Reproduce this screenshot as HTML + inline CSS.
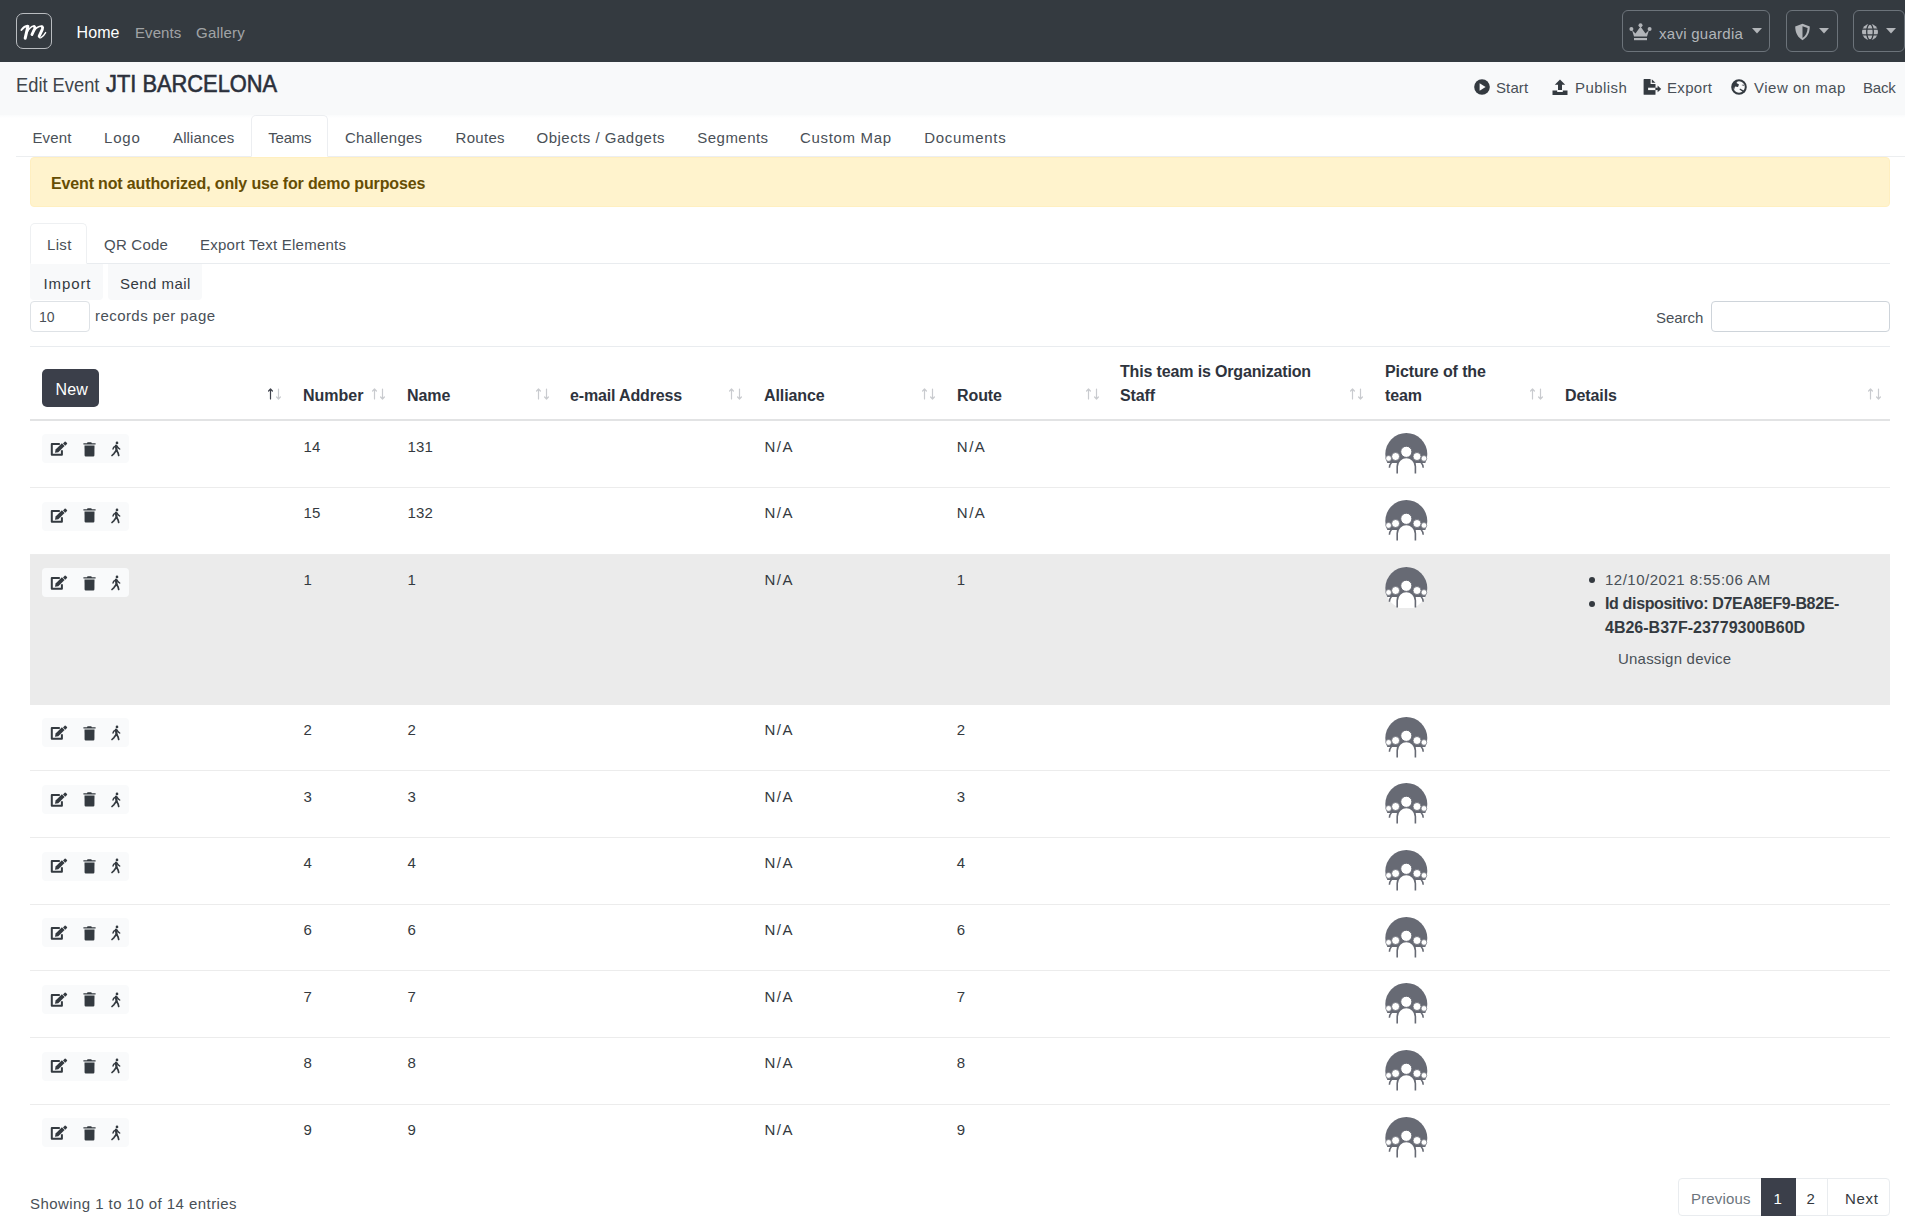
<!DOCTYPE html>
<html><head><meta charset="utf-8"><title>Edit Event</title>
<style>
html,body{margin:0;padding:0;background:#fff;}
body{width:1905px;height:1218px;position:relative;overflow:hidden;font-family:"Liberation Sans",sans-serif;color:#212529;}
.t{position:absolute;white-space:nowrap;}
.r{position:absolute;}
</style></head><body>
<div class="r" style="left:0px;top:0px;width:1905px;height:62px;background:#343a40"></div>
<div class="r" style="left:16px;top:13px;width:36px;height:36px;border:1px solid #b9bcc0;border-radius:7px;box-sizing:border-box"></div>
<svg class="r" style="left:18px;top:22px" width="32" height="20" viewBox="0 0 32 20">
<g fill="none" stroke="#fff" stroke-linecap="round" stroke-linejoin="round">
<path d="M3.4 8 Q6.2 4.2 9.6 3.8" stroke-width="1.9"/>
<path d="M9.9 4.4 L7.2 16.2" stroke-width="3"/>
<path d="M8.8 10.6 Q12.2 4.4 15.8 4.1" stroke-width="1.5"/>
<path d="M16.4 4.6 Q17.2 5.2 16.6 6.8 L13.9 12.6" stroke-width="2.8"/>
<path d="M15.4 9.2 Q19 4.2 23.4 4.1" stroke-width="1.6"/>
<path d="M24.2 4.8 Q25 5.6 24.3 7.3 L21.2 14.2" stroke-width="2.9"/>
<path d="M21.2 14.6 Q21 16.4 23 15.6 Q25.6 14.2 27.6 10.6" stroke-width="1.4"/>
</g></svg>
<div class="t" style="left:76.5px;top:20.71px;font-size:16px;line-height:24px;color:#fff;letter-spacing:0.1px;">Home</div>
<div class="t" style="left:135px;top:22.04px;font-size:15px;line-height:22px;color:rgba(255,255,255,.55);letter-spacing:0.08px;">Events</div>
<div class="t" style="left:196px;top:22.04px;font-size:15px;line-height:22px;color:rgba(255,255,255,.55);letter-spacing:0.22px;">Gallery</div>
<div class="r" style="left:1622px;top:10px;width:148px;height:42px;border:1px solid #6c737a;border-radius:6px;box-sizing:border-box"></div>
<div class="r" style="left:1786px;top:10px;width:52px;height:42px;border:1px solid #6c737a;border-radius:6px;box-sizing:border-box"></div>
<div class="r" style="left:1853px;top:10px;width:52px;height:42px;border:1px solid #6c737a;border-radius:6px;box-sizing:border-box"></div>
<svg class="r" style="left:1629px;top:23px" width="23" height="18" viewBox="0 0 23 18" fill="#b2b5b9">
<circle cx="11.5" cy="2.3" r="2"/><circle cx="2.4" cy="6" r="2"/><circle cx="20.6" cy="6" r="2"/>
<path d="M3 7 L6.5 10.5 L11.5 3.5 L16.5 10.5 L20 7 L18 13.5 H5 Z"/>
<rect x="5" y="15" width="13" height="2.2"/></svg>
<div class="t" style="left:1659px;top:23.04px;font-size:15px;line-height:22px;color:#b2b5b9;letter-spacing:0.27px;">xavi guardia</div>
<svg class="r" style="left:1752px;top:28px" width="10" height="6" viewBox="0 0 10 6"><path d="M0 0 H10 L5 5.5 Z" fill="#b2b5b9"/></svg>
<svg class="r" style="left:1794px;top:23px" width="17" height="18" viewBox="0 0 17 18">
<path d="M8.5 0.8 L15.8 3.6 C15.8 10 13 14.8 8.5 17.2 C4 14.8 1.2 10 1.2 3.6 Z" fill="#b2b5b9"/>
<path d="M8.5 3.2 L13.6 5.1 C13.4 9.8 11.6 13.2 8.5 15 Z" fill="#343a40"/></svg>
<svg class="r" style="left:1819px;top:28px" width="10" height="6" viewBox="0 0 10 6"><path d="M0 0 H10 L5 5.5 Z" fill="#b2b5b9"/></svg>
<svg class="r" style="left:1861px;top:23px" width="18" height="18" viewBox="0 0 18 18">
<circle cx="9" cy="9" r="8" fill="#b2b5b9"/>
<g stroke="#343a40" stroke-width="1.3" fill="none"><path d="M1 6.2 H17 M1 11.8 H17"/><ellipse cx="9" cy="9" rx="3.3" ry="8"/></g></svg>
<svg class="r" style="left:1886px;top:28px" width="10" height="6" viewBox="0 0 10 6"><path d="M0 0 H10 L5 5.5 Z" fill="#b2b5b9"/></svg>
<div class="r" style="left:0px;top:62px;width:1905px;height:53px;background:#f8f9fa"></div>
<div class="r" style="left:0px;top:115px;width:1905px;height:3px;background:linear-gradient(#fafbfc,#fff)"></div>
<div class="t" style="left:16px;top:70.39px;font-size:20px;line-height:30px;color:#40454b;transform:scaleX(0.915);transform-origin:0 0;">Edit Event</div>
<div class="t" style="left:106px;top:66.07px;font-size:24px;line-height:36px;color:#2b303b;transform:scaleX(0.91);transform-origin:0 0;-webkit-text-stroke:0.6px #2b303b;">JTI BARCELONA</div>
<svg class="r" style="left:1474px;top:79px" width="16" height="16" viewBox="0 0 16 16">
<circle cx="8" cy="8" r="7.8" fill="#343a40"/><path d="M5.6 4.3 L11.6 8 L5.6 11.7 Z" fill="#f8f9fa"/></svg>
<div class="t" style="left:1496px;top:77.04px;font-size:15px;line-height:22px;color:#495057;letter-spacing:0.12px;">Start</div>
<svg class="r" style="left:1552px;top:79px" width="16" height="16" viewBox="0 0 16 16" fill="#343a40">
<path d="M8 0.5 L13.2 5.8 H10 V11 H6 V5.8 H2.8 Z"/><path d="M0.5 11.5 H5.2 V13 H10.8 V11.5 H15.5 V16 H0.5 Z"/></svg>
<div class="t" style="left:1575px;top:77.04px;font-size:15px;line-height:22px;color:#495057;letter-spacing:0.45px;">Publish</div>
<svg class="r" style="left:1643px;top:79px" width="19" height="16" viewBox="0 0 19 16">
<path d="M0.6 0.6 Q0.6 0 1.2 0 H7.6 V4.9 H12.5 V15.2 Q12.5 15.8 11.9 15.8 H1.2 Q0.6 15.8 0.6 15.2 Z" fill="#343a40"/>
<path d="M8.8 0.2 L12.5 3.7 H8.8 Z" fill="#343a40"/>
<rect x="5.1" y="8.7" width="7.4" height="2.4" fill="#f8f9fa"/>
<rect x="12.5" y="8.7" width="2.4" height="2.4" fill="#343a40"/>
<path d="M14.6 6.4 L18.2 9.9 L14.6 13.2 Z" fill="#343a40"/></svg>
<div class="t" style="left:1667px;top:77.04px;font-size:15px;line-height:22px;color:#495057;letter-spacing:0.32px;">Export</div>
<svg class="r" style="left:1731px;top:79px" width="16" height="16" viewBox="0 0 16 16">
<circle cx="8" cy="8" r="6.8" fill="none" stroke="#343a40" stroke-width="2"/>
<path d="M2 5 C3 2.5 5 1.8 6.5 2 L5.5 4 L8 5.5 L7 8 L4 7.5 L3 11 C2 9 1.6 7 2 5Z" fill="#343a40"/>
<path d="M9 9.5 L14.5 12.5 L13 13.8 L8.5 10.5 Z" fill="#343a40"/><path d="M10.5 6 L12.5 5.5 L13 7 Z" fill="#343a40"/></svg>
<div class="t" style="left:1754px;top:77.04px;font-size:15px;line-height:22px;color:#495057;letter-spacing:0.5px;">View on map</div>
<div class="t" style="left:1863px;top:77.04px;font-size:15px;line-height:22px;color:#495057;letter-spacing:-0.23px;">Back</div>
<div class="r" style="left:16px;top:156px;width:1889px;height:1px;background:#eceef0"></div>
<div class="r" style="left:251px;top:115px;width:77px;height:42px;border:1px solid #eceef1;border-bottom-color:#fff;border-radius:5px 5px 0 0;box-sizing:border-box;background:#fff"></div>
<div class="t" style="left:32.5px;top:127.04px;font-size:15px;line-height:22px;color:#495057;letter-spacing:0.12px;">Event</div>
<div class="t" style="left:104px;top:127.04px;font-size:15px;line-height:22px;color:#495057;letter-spacing:0.8px;">Logo</div>
<div class="t" style="left:173px;top:127.04px;font-size:15px;line-height:22px;color:#495057;letter-spacing:0.14px;">Alliances</div>
<div class="t" style="left:268.3px;top:127.04px;font-size:15px;line-height:22px;color:#495057;letter-spacing:-0.22px;">Teams</div>
<div class="t" style="left:345px;top:127.04px;font-size:15px;line-height:22px;color:#495057;letter-spacing:0.22px;">Challenges</div>
<div class="t" style="left:455.6px;top:127.04px;font-size:15px;line-height:22px;color:#495057;letter-spacing:0.28px;">Routes</div>
<div class="t" style="left:536.5px;top:127.04px;font-size:15px;line-height:22px;color:#495057;letter-spacing:0.5px;">Objects / Gadgets</div>
<div class="t" style="left:697.3px;top:127.04px;font-size:15px;line-height:22px;color:#495057;letter-spacing:0.47px;">Segments</div>
<div class="t" style="left:800px;top:127.04px;font-size:15px;line-height:22px;color:#495057;letter-spacing:0.68px;">Custom Map</div>
<div class="t" style="left:924.2px;top:127.04px;font-size:15px;line-height:22px;color:#495057;letter-spacing:0.71px;">Documents</div>
<div class="r" style="left:30px;top:157px;width:1860px;height:50px;background:#fff3cd;border:1px solid #ffefc0;box-sizing:border-box;border-radius:4px"></div>
<div class="t" style="left:51px;top:171.71px;font-size:16px;line-height:24px;font-weight:700;color:#664d03;letter-spacing:-0.15px;">Event not authorized, only use for demo purposes</div>
<div class="r" style="left:30px;top:263px;width:1860px;height:1px;background:#e9ecef"></div>
<div class="r" style="left:30px;top:223px;width:57px;height:41px;border:1px solid #eef0f2;border-bottom-color:#fff;border-radius:5px 5px 0 0;box-sizing:border-box;background:#fff"></div>
<div class="t" style="left:47px;top:234.04px;font-size:15px;line-height:22px;color:#495057;letter-spacing:0.33px;">List</div>
<div class="t" style="left:104px;top:234.04px;font-size:15px;line-height:22px;color:#495057;letter-spacing:0.22px;">QR Code</div>
<div class="t" style="left:200px;top:234.04px;font-size:15px;line-height:22px;color:#495057;letter-spacing:0.24px;">Export Text Elements</div>
<div class="r" style="left:30px;top:264px;width:73px;height:36px;background:#f8f9fa;border-radius:0 0 4px 4px"></div>
<div class="r" style="left:108px;top:264px;width:94px;height:36px;background:#f8f9fa;border-radius:0 0 4px 4px"></div>
<div class="t" style="left:43.5px;top:273.04px;font-size:15px;line-height:22px;color:#343a40;letter-spacing:0.9px;">Import</div>
<div class="t" style="left:120px;top:273.04px;font-size:15px;line-height:22px;color:#343a40;letter-spacing:0.46px;">Send mail</div>
<div class="r" style="left:30px;top:301px;width:60px;height:31px;border:1px solid #dee2e6;border-radius:4px;box-sizing:border-box;background:#fff"></div>
<div class="t" style="left:39px;top:306.87px;font-size:14px;line-height:21px;color:#495057;">10</div>
<div class="t" style="left:95px;top:305.04px;font-size:15px;line-height:22px;color:#495057;letter-spacing:0.44px;">records per page</div>
<div class="t" style="left:1656px;top:307.04px;font-size:15px;line-height:22px;color:#495057;letter-spacing:-0.06px;">Search</div>
<div class="r" style="left:1711px;top:301px;width:179px;height:31px;border:1px solid #ced4da;border-radius:4px;box-sizing:border-box;background:#fff"></div>
<div class="r" style="left:30px;top:346px;width:1860px;height:1px;background:#e9ecef"></div>
<div class="r" style="left:42px;top:369px;width:57px;height:38px;background:#3b3f4a;border-radius:5px"></div>
<div class="t" style="left:55.5px;top:377.71px;font-size:16px;line-height:24px;color:#fff;letter-spacing:0.2px;">New</div>
<svg class="r" style="left:267px;top:388px" width="15" height="12" viewBox="0 0 15 12">
<g fill="none" stroke-width="1.2" stroke-linecap="round" stroke-linejoin="round">
<path d="M3.5 11 V1 M1.6 3 L3.5 1 L5.4 3" stroke="#40434d"/>
<path d="M11.5 1 V11 M9.6 9 L11.5 11 L13.4 9" stroke="#c9cbcf"/></g></svg>
<div class="t" style="left:303px;top:383.71px;font-size:16px;line-height:24px;font-weight:700;color:#2e333d;letter-spacing:0px;">Number</div>
<svg class="r" style="left:371px;top:388px" width="15" height="12" viewBox="0 0 15 12">
<g fill="none" stroke-width="1.2" stroke-linecap="round" stroke-linejoin="round">
<path d="M3.5 11 V1 M1.6 3 L3.5 1 L5.4 3" stroke="#c9cbcf"/>
<path d="M11.5 1 V11 M9.6 9 L11.5 11 L13.4 9" stroke="#c9cbcf"/></g></svg>
<div class="t" style="left:407px;top:383.71px;font-size:16px;line-height:24px;font-weight:700;color:#2e333d;letter-spacing:-0.1px;">Name</div>
<svg class="r" style="left:535px;top:388px" width="15" height="12" viewBox="0 0 15 12">
<g fill="none" stroke-width="1.2" stroke-linecap="round" stroke-linejoin="round">
<path d="M3.5 11 V1 M1.6 3 L3.5 1 L5.4 3" stroke="#c9cbcf"/>
<path d="M11.5 1 V11 M9.6 9 L11.5 11 L13.4 9" stroke="#c9cbcf"/></g></svg>
<div class="t" style="left:570px;top:383.71px;font-size:16px;line-height:24px;font-weight:700;color:#2e333d;letter-spacing:-0.15px;">e-mail Address</div>
<svg class="r" style="left:728px;top:388px" width="15" height="12" viewBox="0 0 15 12">
<g fill="none" stroke-width="1.2" stroke-linecap="round" stroke-linejoin="round">
<path d="M3.5 11 V1 M1.6 3 L3.5 1 L5.4 3" stroke="#c9cbcf"/>
<path d="M11.5 1 V11 M9.6 9 L11.5 11 L13.4 9" stroke="#c9cbcf"/></g></svg>
<div class="t" style="left:764px;top:383.71px;font-size:16px;line-height:24px;font-weight:700;color:#2e333d;letter-spacing:-0.1px;">Alliance</div>
<svg class="r" style="left:921px;top:388px" width="15" height="12" viewBox="0 0 15 12">
<g fill="none" stroke-width="1.2" stroke-linecap="round" stroke-linejoin="round">
<path d="M3.5 11 V1 M1.6 3 L3.5 1 L5.4 3" stroke="#c9cbcf"/>
<path d="M11.5 1 V11 M9.6 9 L11.5 11 L13.4 9" stroke="#c9cbcf"/></g></svg>
<div class="t" style="left:957px;top:383.71px;font-size:16px;line-height:24px;font-weight:700;color:#2e333d;letter-spacing:-0.1px;">Route</div>
<svg class="r" style="left:1085px;top:388px" width="15" height="12" viewBox="0 0 15 12">
<g fill="none" stroke-width="1.2" stroke-linecap="round" stroke-linejoin="round">
<path d="M3.5 11 V1 M1.6 3 L3.5 1 L5.4 3" stroke="#c9cbcf"/>
<path d="M11.5 1 V11 M9.6 9 L11.5 11 L13.4 9" stroke="#c9cbcf"/></g></svg>
<div class="t" style="left:1120px;top:359.71px;font-size:16px;line-height:24px;font-weight:700;color:#2e333d;letter-spacing:-0.15px;">This team is Organization</div>
<div class="t" style="left:1120px;top:383.71px;font-size:16px;line-height:24px;font-weight:700;color:#2e333d;letter-spacing:-0.15px;">Staff</div>
<svg class="r" style="left:1349px;top:388px" width="15" height="12" viewBox="0 0 15 12">
<g fill="none" stroke-width="1.2" stroke-linecap="round" stroke-linejoin="round">
<path d="M3.5 11 V1 M1.6 3 L3.5 1 L5.4 3" stroke="#c9cbcf"/>
<path d="M11.5 1 V11 M9.6 9 L11.5 11 L13.4 9" stroke="#c9cbcf"/></g></svg>
<div class="t" style="left:1385px;top:359.71px;font-size:16px;line-height:24px;font-weight:700;color:#2e333d;letter-spacing:-0.1px;">Picture of the</div>
<div class="t" style="left:1385px;top:383.71px;font-size:16px;line-height:24px;font-weight:700;color:#2e333d;letter-spacing:-0.1px;">team</div>
<svg class="r" style="left:1529px;top:388px" width="15" height="12" viewBox="0 0 15 12">
<g fill="none" stroke-width="1.2" stroke-linecap="round" stroke-linejoin="round">
<path d="M3.5 11 V1 M1.6 3 L3.5 1 L5.4 3" stroke="#c9cbcf"/>
<path d="M11.5 1 V11 M9.6 9 L11.5 11 L13.4 9" stroke="#c9cbcf"/></g></svg>
<div class="t" style="left:1565px;top:383.71px;font-size:16px;line-height:24px;font-weight:700;color:#2e333d;letter-spacing:-0.1px;">Details</div>
<svg class="r" style="left:1867px;top:388px" width="15" height="12" viewBox="0 0 15 12">
<g fill="none" stroke-width="1.2" stroke-linecap="round" stroke-linejoin="round">
<path d="M3.5 11 V1 M1.6 3 L3.5 1 L5.4 3" stroke="#c9cbcf"/>
<path d="M11.5 1 V11 M9.6 9 L11.5 11 L13.4 9" stroke="#c9cbcf"/></g></svg>
<div class="r" style="left:30px;top:419px;width:1860px;height:2px;background:#e2e3e4"></div>
<div class="r" style="left:42px;top:434px;width:87px;height:29px;background:#f9fafb;border-radius:4px"></div>
<svg class="r" style="left:48px;top:439px" width="22" height="20" viewBox="0 0 22 20">
<path d="M11.8 4.9 H3.8 V15.7 H13.9 V11.2" fill="none" stroke="#343a40" stroke-width="2" stroke-linejoin="round"/>
<path d="M7 13.8 L7.6 10.6 L13.9 4.3 L16.6 7 L10.3 13.3 Z" fill="#343a40"/>
<path d="M15 4.4 L16.7 2.7 Q17.2 2.3 17.7 2.7 L19 4 Q19.4 4.5 19 5 L17.3 6.7 Z" fill="#343a40"/>
</svg>
<svg class="r" style="left:82.5px;top:441.5px" width="13" height="15" viewBox="0 0 13 15" fill="#343a40">
<path d="M4.5 0.3 H8.3 L8.8 1.2 H12.6 V2.5 H0.4 V1.2 H4 Z"/><path d="M1.5 3.4 H11.5 L11.4 13.4 Q11.3 14.4 10.3 14.4 H2.7 Q1.7 14.4 1.6 13.4 Z"/></svg>
<svg class="r" style="left:110px;top:440px" width="12" height="17" viewBox="0 0 12 17">
<circle cx="7" cy="2.9" r="1.35" fill="#343a40"/>
<g fill="none" stroke="#343a40" stroke-linecap="round" stroke-linejoin="round">
<path d="M6 5.6 L6.6 10.9" stroke-width="2.3"/>
<path d="M5.6 6.1 L3.6 7.4 L3 9" stroke-width="1.4"/>
<path d="M6.9 6 L8.2 7.9 L9.7 9" stroke-width="1.4"/>
<path d="M6.8 10.8 L8.1 13 L8.7 15.5" stroke-width="1.7"/>
<path d="M5.8 11 L4 13.6 L2 15.5" stroke-width="1.7"/>
</g></svg>
<div class="t" style="left:303.5px;top:435.84px;font-size:15px;line-height:22px;color:#343a40;letter-spacing:0.1px;">14</div>
<div class="t" style="left:407.5px;top:435.84px;font-size:15px;line-height:22px;color:#343a40;letter-spacing:0.1px;">131</div>
<div class="t" style="left:764.5px;top:435.84px;font-size:15px;line-height:22px;color:#343a40;letter-spacing:1.5px;">N/A</div>
<div class="t" style="left:956.8px;top:435.84px;font-size:15px;line-height:22px;color:#343a40;letter-spacing:1.5px;">N/A</div>
<svg class="r" style="left:1384.5px;top:433.3px" width="43" height="41" viewBox="0 0 43 41">
<defs><clipPath id="c433"><rect x="0" y="0" width="43" height="30"/></clipPath></defs>
<circle cx="21.3" cy="21" r="21" fill="#fff"/><circle cx="21.3" cy="21" r="21" fill="#676a74" clip-path="url(#c433)"/>
<path d="M0.6 29 Q1 28.5 3 28.5" stroke="#676a74" stroke-width="0" fill="none"/>

<path d="M4.4 34.8 Q4.8 28.2 11.4 27.5" fill="none" stroke="#676a74" stroke-width="1.5"/>
<path d="M38.2 34.8 Q37.8 28.2 31.2 27.5" fill="none" stroke="#676a74" stroke-width="1.5"/>
<path d="M12.2 40.5 V33.5 A9.1 9.1 0 0 1 30.4 33.5 V40.5" fill="#fff" stroke="#676a74" stroke-width="1.6"/>
<circle cx="21.3" cy="18.8" r="5.6" fill="#fff" stroke="#676a74" stroke-width="1"/>
<circle cx="10.6" cy="23.5" r="4" fill="#fff" stroke="#676a74" stroke-width="0.8"/>
<circle cx="32" cy="23.5" r="4" fill="#fff" stroke="#676a74" stroke-width="0.8"/>
<circle cx="3.6" cy="25.4" r="2.8" fill="#fff" stroke="#676a74" stroke-width="0.6"/>
<circle cx="39" cy="25.4" r="2.8" fill="#fff" stroke="#676a74" stroke-width="0.6"/>
</svg>
<div class="r" style="left:30px;top:487px;width:1860px;height:1px;background:#ececec"></div>
<div class="r" style="left:42px;top:502px;width:87px;height:29px;background:#f9fafb;border-radius:4px"></div>
<svg class="r" style="left:48px;top:506px" width="22" height="20" viewBox="0 0 22 20">
<path d="M11.8 4.9 H3.8 V15.7 H13.9 V11.2" fill="none" stroke="#343a40" stroke-width="2" stroke-linejoin="round"/>
<path d="M7 13.8 L7.6 10.6 L13.9 4.3 L16.6 7 L10.3 13.3 Z" fill="#343a40"/>
<path d="M15 4.4 L16.7 2.7 Q17.2 2.3 17.7 2.7 L19 4 Q19.4 4.5 19 5 L17.3 6.7 Z" fill="#343a40"/>
</svg>
<svg class="r" style="left:82.5px;top:507.5px" width="13" height="15" viewBox="0 0 13 15" fill="#343a40">
<path d="M4.5 0.3 H8.3 L8.8 1.2 H12.6 V2.5 H0.4 V1.2 H4 Z"/><path d="M1.5 3.4 H11.5 L11.4 13.4 Q11.3 14.4 10.3 14.4 H2.7 Q1.7 14.4 1.6 13.4 Z"/></svg>
<svg class="r" style="left:110px;top:507px" width="12" height="17" viewBox="0 0 12 17">
<circle cx="7" cy="2.9" r="1.35" fill="#343a40"/>
<g fill="none" stroke="#343a40" stroke-linecap="round" stroke-linejoin="round">
<path d="M6 5.6 L6.6 10.9" stroke-width="2.3"/>
<path d="M5.6 6.1 L3.6 7.4 L3 9" stroke-width="1.4"/>
<path d="M6.9 6 L8.2 7.9 L9.7 9" stroke-width="1.4"/>
<path d="M6.8 10.8 L8.1 13 L8.7 15.5" stroke-width="1.7"/>
<path d="M5.8 11 L4 13.6 L2 15.5" stroke-width="1.7"/>
</g></svg>
<div class="t" style="left:303.5px;top:502.04px;font-size:15px;line-height:22px;color:#343a40;letter-spacing:0.1px;">15</div>
<div class="t" style="left:407.5px;top:502.04px;font-size:15px;line-height:22px;color:#343a40;letter-spacing:0.1px;">132</div>
<div class="t" style="left:764.5px;top:502.04px;font-size:15px;line-height:22px;color:#343a40;letter-spacing:1.5px;">N/A</div>
<div class="t" style="left:956.8px;top:502.04px;font-size:15px;line-height:22px;color:#343a40;letter-spacing:1.5px;">N/A</div>
<svg class="r" style="left:1384.5px;top:499.8px" width="43" height="41" viewBox="0 0 43 41">
<defs><clipPath id="c499"><rect x="0" y="0" width="43" height="30"/></clipPath></defs>
<circle cx="21.3" cy="21" r="21" fill="#fff"/><circle cx="21.3" cy="21" r="21" fill="#676a74" clip-path="url(#c499)"/>
<path d="M0.6 29 Q1 28.5 3 28.5" stroke="#676a74" stroke-width="0" fill="none"/>

<path d="M4.4 34.8 Q4.8 28.2 11.4 27.5" fill="none" stroke="#676a74" stroke-width="1.5"/>
<path d="M38.2 34.8 Q37.8 28.2 31.2 27.5" fill="none" stroke="#676a74" stroke-width="1.5"/>
<path d="M12.2 40.5 V33.5 A9.1 9.1 0 0 1 30.4 33.5 V40.5" fill="#fff" stroke="#676a74" stroke-width="1.6"/>
<circle cx="21.3" cy="18.8" r="5.6" fill="#fff" stroke="#676a74" stroke-width="1"/>
<circle cx="10.6" cy="23.5" r="4" fill="#fff" stroke="#676a74" stroke-width="0.8"/>
<circle cx="32" cy="23.5" r="4" fill="#fff" stroke="#676a74" stroke-width="0.8"/>
<circle cx="3.6" cy="25.4" r="2.8" fill="#fff" stroke="#676a74" stroke-width="0.6"/>
<circle cx="39" cy="25.4" r="2.8" fill="#fff" stroke="#676a74" stroke-width="0.6"/>
</svg>
<div class="r" style="left:30px;top:555px;width:1860px;height:150px;background:#ebebeb"></div>
<div class="r" style="left:30px;top:554px;width:1860px;height:1px;background:#ececec"></div>
<div class="r" style="left:42px;top:568px;width:87px;height:29px;background:#f9fafb;border-radius:4px"></div>
<svg class="r" style="left:48px;top:573px" width="22" height="20" viewBox="0 0 22 20">
<path d="M11.8 4.9 H3.8 V15.7 H13.9 V11.2" fill="none" stroke="#343a40" stroke-width="2" stroke-linejoin="round"/>
<path d="M7 13.8 L7.6 10.6 L13.9 4.3 L16.6 7 L10.3 13.3 Z" fill="#343a40"/>
<path d="M15 4.4 L16.7 2.7 Q17.2 2.3 17.7 2.7 L19 4 Q19.4 4.5 19 5 L17.3 6.7 Z" fill="#343a40"/>
</svg>
<svg class="r" style="left:82.5px;top:575.5px" width="13" height="15" viewBox="0 0 13 15" fill="#343a40">
<path d="M4.5 0.3 H8.3 L8.8 1.2 H12.6 V2.5 H0.4 V1.2 H4 Z"/><path d="M1.5 3.4 H11.5 L11.4 13.4 Q11.3 14.4 10.3 14.4 H2.7 Q1.7 14.4 1.6 13.4 Z"/></svg>
<svg class="r" style="left:110px;top:574px" width="12" height="17" viewBox="0 0 12 17">
<circle cx="7" cy="2.9" r="1.35" fill="#343a40"/>
<g fill="none" stroke="#343a40" stroke-linecap="round" stroke-linejoin="round">
<path d="M6 5.6 L6.6 10.9" stroke-width="2.3"/>
<path d="M5.6 6.1 L3.6 7.4 L3 9" stroke-width="1.4"/>
<path d="M6.9 6 L8.2 7.9 L9.7 9" stroke-width="1.4"/>
<path d="M6.8 10.8 L8.1 13 L8.7 15.5" stroke-width="1.7"/>
<path d="M5.8 11 L4 13.6 L2 15.5" stroke-width="1.7"/>
</g></svg>
<div class="t" style="left:303.5px;top:569.04px;font-size:15px;line-height:22px;color:#343a40;letter-spacing:0.1px;">1</div>
<div class="t" style="left:407.5px;top:569.04px;font-size:15px;line-height:22px;color:#343a40;letter-spacing:0.1px;">1</div>
<div class="t" style="left:764.5px;top:569.04px;font-size:15px;line-height:22px;color:#343a40;letter-spacing:1.5px;">N/A</div>
<div class="t" style="left:956.8px;top:569.04px;font-size:15px;line-height:22px;color:#343a40;letter-spacing:0.1px;">1</div>
<svg class="r" style="left:1384.5px;top:566.8px" width="43" height="41" viewBox="0 0 43 41">
<defs><clipPath id="c566"><rect x="0" y="0" width="43" height="30"/></clipPath></defs>
<circle cx="21.3" cy="21" r="21" fill="#fff"/><circle cx="21.3" cy="21" r="21" fill="#676a74" clip-path="url(#c566)"/>
<path d="M0.6 29 Q1 28.5 3 28.5" stroke="#676a74" stroke-width="0" fill="none"/>

<path d="M4.4 34.8 Q4.8 28.2 11.4 27.5" fill="none" stroke="#676a74" stroke-width="1.5"/>
<path d="M38.2 34.8 Q37.8 28.2 31.2 27.5" fill="none" stroke="#676a74" stroke-width="1.5"/>
<path d="M12.2 40.5 V33.5 A9.1 9.1 0 0 1 30.4 33.5 V40.5" fill="#fff" stroke="#676a74" stroke-width="1.6"/>
<circle cx="21.3" cy="18.8" r="5.6" fill="#fff" stroke="#676a74" stroke-width="1"/>
<circle cx="10.6" cy="23.5" r="4" fill="#fff" stroke="#676a74" stroke-width="0.8"/>
<circle cx="32" cy="23.5" r="4" fill="#fff" stroke="#676a74" stroke-width="0.8"/>
<circle cx="3.6" cy="25.4" r="2.8" fill="#fff" stroke="#676a74" stroke-width="0.6"/>
<circle cx="39" cy="25.4" r="2.8" fill="#fff" stroke="#676a74" stroke-width="0.6"/>
</svg>
<div class="r" style="left:42px;top:718px;width:87px;height:29px;background:#f9fafb;border-radius:4px"></div>
<svg class="r" style="left:48px;top:723px" width="22" height="20" viewBox="0 0 22 20">
<path d="M11.8 4.9 H3.8 V15.7 H13.9 V11.2" fill="none" stroke="#343a40" stroke-width="2" stroke-linejoin="round"/>
<path d="M7 13.8 L7.6 10.6 L13.9 4.3 L16.6 7 L10.3 13.3 Z" fill="#343a40"/>
<path d="M15 4.4 L16.7 2.7 Q17.2 2.3 17.7 2.7 L19 4 Q19.4 4.5 19 5 L17.3 6.7 Z" fill="#343a40"/>
</svg>
<svg class="r" style="left:82.5px;top:725.5px" width="13" height="15" viewBox="0 0 13 15" fill="#343a40">
<path d="M4.5 0.3 H8.3 L8.8 1.2 H12.6 V2.5 H0.4 V1.2 H4 Z"/><path d="M1.5 3.4 H11.5 L11.4 13.4 Q11.3 14.4 10.3 14.4 H2.7 Q1.7 14.4 1.6 13.4 Z"/></svg>
<svg class="r" style="left:110px;top:724px" width="12" height="17" viewBox="0 0 12 17">
<circle cx="7" cy="2.9" r="1.35" fill="#343a40"/>
<g fill="none" stroke="#343a40" stroke-linecap="round" stroke-linejoin="round">
<path d="M6 5.6 L6.6 10.9" stroke-width="2.3"/>
<path d="M5.6 6.1 L3.6 7.4 L3 9" stroke-width="1.4"/>
<path d="M6.9 6 L8.2 7.9 L9.7 9" stroke-width="1.4"/>
<path d="M6.8 10.8 L8.1 13 L8.7 15.5" stroke-width="1.7"/>
<path d="M5.8 11 L4 13.6 L2 15.5" stroke-width="1.7"/>
</g></svg>
<div class="t" style="left:303.5px;top:719.04px;font-size:15px;line-height:22px;color:#343a40;letter-spacing:0.1px;">2</div>
<div class="t" style="left:407.5px;top:719.04px;font-size:15px;line-height:22px;color:#343a40;letter-spacing:0.1px;">2</div>
<div class="t" style="left:764.5px;top:719.04px;font-size:15px;line-height:22px;color:#343a40;letter-spacing:1.5px;">N/A</div>
<div class="t" style="left:956.8px;top:719.04px;font-size:15px;line-height:22px;color:#343a40;letter-spacing:0.1px;">2</div>
<svg class="r" style="left:1384.5px;top:716.8px" width="43" height="41" viewBox="0 0 43 41">
<defs><clipPath id="c716"><rect x="0" y="0" width="43" height="30"/></clipPath></defs>
<circle cx="21.3" cy="21" r="21" fill="#fff"/><circle cx="21.3" cy="21" r="21" fill="#676a74" clip-path="url(#c716)"/>
<path d="M0.6 29 Q1 28.5 3 28.5" stroke="#676a74" stroke-width="0" fill="none"/>

<path d="M4.4 34.8 Q4.8 28.2 11.4 27.5" fill="none" stroke="#676a74" stroke-width="1.5"/>
<path d="M38.2 34.8 Q37.8 28.2 31.2 27.5" fill="none" stroke="#676a74" stroke-width="1.5"/>
<path d="M12.2 40.5 V33.5 A9.1 9.1 0 0 1 30.4 33.5 V40.5" fill="#fff" stroke="#676a74" stroke-width="1.6"/>
<circle cx="21.3" cy="18.8" r="5.6" fill="#fff" stroke="#676a74" stroke-width="1"/>
<circle cx="10.6" cy="23.5" r="4" fill="#fff" stroke="#676a74" stroke-width="0.8"/>
<circle cx="32" cy="23.5" r="4" fill="#fff" stroke="#676a74" stroke-width="0.8"/>
<circle cx="3.6" cy="25.4" r="2.8" fill="#fff" stroke="#676a74" stroke-width="0.6"/>
<circle cx="39" cy="25.4" r="2.8" fill="#fff" stroke="#676a74" stroke-width="0.6"/>
</svg>
<div class="r" style="left:30px;top:770px;width:1860px;height:1px;background:#ececec"></div>
<div class="r" style="left:42px;top:785px;width:87px;height:29px;background:#f9fafb;border-radius:4px"></div>
<svg class="r" style="left:48px;top:790px" width="22" height="20" viewBox="0 0 22 20">
<path d="M11.8 4.9 H3.8 V15.7 H13.9 V11.2" fill="none" stroke="#343a40" stroke-width="2" stroke-linejoin="round"/>
<path d="M7 13.8 L7.6 10.6 L13.9 4.3 L16.6 7 L10.3 13.3 Z" fill="#343a40"/>
<path d="M15 4.4 L16.7 2.7 Q17.2 2.3 17.7 2.7 L19 4 Q19.4 4.5 19 5 L17.3 6.7 Z" fill="#343a40"/>
</svg>
<svg class="r" style="left:82.5px;top:791.5px" width="13" height="15" viewBox="0 0 13 15" fill="#343a40">
<path d="M4.5 0.3 H8.3 L8.8 1.2 H12.6 V2.5 H0.4 V1.2 H4 Z"/><path d="M1.5 3.4 H11.5 L11.4 13.4 Q11.3 14.4 10.3 14.4 H2.7 Q1.7 14.4 1.6 13.4 Z"/></svg>
<svg class="r" style="left:110px;top:791px" width="12" height="17" viewBox="0 0 12 17">
<circle cx="7" cy="2.9" r="1.35" fill="#343a40"/>
<g fill="none" stroke="#343a40" stroke-linecap="round" stroke-linejoin="round">
<path d="M6 5.6 L6.6 10.9" stroke-width="2.3"/>
<path d="M5.6 6.1 L3.6 7.4 L3 9" stroke-width="1.4"/>
<path d="M6.9 6 L8.2 7.9 L9.7 9" stroke-width="1.4"/>
<path d="M6.8 10.8 L8.1 13 L8.7 15.5" stroke-width="1.7"/>
<path d="M5.8 11 L4 13.6 L2 15.5" stroke-width="1.7"/>
</g></svg>
<div class="t" style="left:303.5px;top:785.71px;font-size:15px;line-height:22px;color:#343a40;letter-spacing:0.1px;">3</div>
<div class="t" style="left:407.5px;top:785.71px;font-size:15px;line-height:22px;color:#343a40;letter-spacing:0.1px;">3</div>
<div class="t" style="left:764.5px;top:785.71px;font-size:15px;line-height:22px;color:#343a40;letter-spacing:1.5px;">N/A</div>
<div class="t" style="left:956.8px;top:785.71px;font-size:15px;line-height:22px;color:#343a40;letter-spacing:0.1px;">3</div>
<svg class="r" style="left:1384.5px;top:783.4699999999999px" width="43" height="41" viewBox="0 0 43 41">
<defs><clipPath id="c783"><rect x="0" y="0" width="43" height="30"/></clipPath></defs>
<circle cx="21.3" cy="21" r="21" fill="#fff"/><circle cx="21.3" cy="21" r="21" fill="#676a74" clip-path="url(#c783)"/>
<path d="M0.6 29 Q1 28.5 3 28.5" stroke="#676a74" stroke-width="0" fill="none"/>

<path d="M4.4 34.8 Q4.8 28.2 11.4 27.5" fill="none" stroke="#676a74" stroke-width="1.5"/>
<path d="M38.2 34.8 Q37.8 28.2 31.2 27.5" fill="none" stroke="#676a74" stroke-width="1.5"/>
<path d="M12.2 40.5 V33.5 A9.1 9.1 0 0 1 30.4 33.5 V40.5" fill="#fff" stroke="#676a74" stroke-width="1.6"/>
<circle cx="21.3" cy="18.8" r="5.6" fill="#fff" stroke="#676a74" stroke-width="1"/>
<circle cx="10.6" cy="23.5" r="4" fill="#fff" stroke="#676a74" stroke-width="0.8"/>
<circle cx="32" cy="23.5" r="4" fill="#fff" stroke="#676a74" stroke-width="0.8"/>
<circle cx="3.6" cy="25.4" r="2.8" fill="#fff" stroke="#676a74" stroke-width="0.6"/>
<circle cx="39" cy="25.4" r="2.8" fill="#fff" stroke="#676a74" stroke-width="0.6"/>
</svg>
<div class="r" style="left:30px;top:837px;width:1860px;height:1px;background:#ececec"></div>
<div class="r" style="left:42px;top:852px;width:87px;height:29px;background:#f9fafb;border-radius:4px"></div>
<svg class="r" style="left:48px;top:856px" width="22" height="20" viewBox="0 0 22 20">
<path d="M11.8 4.9 H3.8 V15.7 H13.9 V11.2" fill="none" stroke="#343a40" stroke-width="2" stroke-linejoin="round"/>
<path d="M7 13.8 L7.6 10.6 L13.9 4.3 L16.6 7 L10.3 13.3 Z" fill="#343a40"/>
<path d="M15 4.4 L16.7 2.7 Q17.2 2.3 17.7 2.7 L19 4 Q19.4 4.5 19 5 L17.3 6.7 Z" fill="#343a40"/>
</svg>
<svg class="r" style="left:82.5px;top:858.5px" width="13" height="15" viewBox="0 0 13 15" fill="#343a40">
<path d="M4.5 0.3 H8.3 L8.8 1.2 H12.6 V2.5 H0.4 V1.2 H4 Z"/><path d="M1.5 3.4 H11.5 L11.4 13.4 Q11.3 14.4 10.3 14.4 H2.7 Q1.7 14.4 1.6 13.4 Z"/></svg>
<svg class="r" style="left:110px;top:857px" width="12" height="17" viewBox="0 0 12 17">
<circle cx="7" cy="2.9" r="1.35" fill="#343a40"/>
<g fill="none" stroke="#343a40" stroke-linecap="round" stroke-linejoin="round">
<path d="M6 5.6 L6.6 10.9" stroke-width="2.3"/>
<path d="M5.6 6.1 L3.6 7.4 L3 9" stroke-width="1.4"/>
<path d="M6.9 6 L8.2 7.9 L9.7 9" stroke-width="1.4"/>
<path d="M6.8 10.8 L8.1 13 L8.7 15.5" stroke-width="1.7"/>
<path d="M5.8 11 L4 13.6 L2 15.5" stroke-width="1.7"/>
</g></svg>
<div class="t" style="left:303.5px;top:852.37px;font-size:15px;line-height:22px;color:#343a40;letter-spacing:0.1px;">4</div>
<div class="t" style="left:407.5px;top:852.37px;font-size:15px;line-height:22px;color:#343a40;letter-spacing:0.1px;">4</div>
<div class="t" style="left:764.5px;top:852.37px;font-size:15px;line-height:22px;color:#343a40;letter-spacing:1.5px;">N/A</div>
<div class="t" style="left:956.8px;top:852.37px;font-size:15px;line-height:22px;color:#343a40;letter-spacing:0.1px;">4</div>
<svg class="r" style="left:1384.5px;top:850.13px" width="43" height="41" viewBox="0 0 43 41">
<defs><clipPath id="c850"><rect x="0" y="0" width="43" height="30"/></clipPath></defs>
<circle cx="21.3" cy="21" r="21" fill="#fff"/><circle cx="21.3" cy="21" r="21" fill="#676a74" clip-path="url(#c850)"/>
<path d="M0.6 29 Q1 28.5 3 28.5" stroke="#676a74" stroke-width="0" fill="none"/>

<path d="M4.4 34.8 Q4.8 28.2 11.4 27.5" fill="none" stroke="#676a74" stroke-width="1.5"/>
<path d="M38.2 34.8 Q37.8 28.2 31.2 27.5" fill="none" stroke="#676a74" stroke-width="1.5"/>
<path d="M12.2 40.5 V33.5 A9.1 9.1 0 0 1 30.4 33.5 V40.5" fill="#fff" stroke="#676a74" stroke-width="1.6"/>
<circle cx="21.3" cy="18.8" r="5.6" fill="#fff" stroke="#676a74" stroke-width="1"/>
<circle cx="10.6" cy="23.5" r="4" fill="#fff" stroke="#676a74" stroke-width="0.8"/>
<circle cx="32" cy="23.5" r="4" fill="#fff" stroke="#676a74" stroke-width="0.8"/>
<circle cx="3.6" cy="25.4" r="2.8" fill="#fff" stroke="#676a74" stroke-width="0.6"/>
<circle cx="39" cy="25.4" r="2.8" fill="#fff" stroke="#676a74" stroke-width="0.6"/>
</svg>
<div class="r" style="left:30px;top:904px;width:1860px;height:1px;background:#ececec"></div>
<div class="r" style="left:42px;top:918px;width:87px;height:29px;background:#f9fafb;border-radius:4px"></div>
<svg class="r" style="left:48px;top:923px" width="22" height="20" viewBox="0 0 22 20">
<path d="M11.8 4.9 H3.8 V15.7 H13.9 V11.2" fill="none" stroke="#343a40" stroke-width="2" stroke-linejoin="round"/>
<path d="M7 13.8 L7.6 10.6 L13.9 4.3 L16.6 7 L10.3 13.3 Z" fill="#343a40"/>
<path d="M15 4.4 L16.7 2.7 Q17.2 2.3 17.7 2.7 L19 4 Q19.4 4.5 19 5 L17.3 6.7 Z" fill="#343a40"/>
</svg>
<svg class="r" style="left:82.5px;top:925.5px" width="13" height="15" viewBox="0 0 13 15" fill="#343a40">
<path d="M4.5 0.3 H8.3 L8.8 1.2 H12.6 V2.5 H0.4 V1.2 H4 Z"/><path d="M1.5 3.4 H11.5 L11.4 13.4 Q11.3 14.4 10.3 14.4 H2.7 Q1.7 14.4 1.6 13.4 Z"/></svg>
<svg class="r" style="left:110px;top:924px" width="12" height="17" viewBox="0 0 12 17">
<circle cx="7" cy="2.9" r="1.35" fill="#343a40"/>
<g fill="none" stroke="#343a40" stroke-linecap="round" stroke-linejoin="round">
<path d="M6 5.6 L6.6 10.9" stroke-width="2.3"/>
<path d="M5.6 6.1 L3.6 7.4 L3 9" stroke-width="1.4"/>
<path d="M6.9 6 L8.2 7.9 L9.7 9" stroke-width="1.4"/>
<path d="M6.8 10.8 L8.1 13 L8.7 15.5" stroke-width="1.7"/>
<path d="M5.8 11 L4 13.6 L2 15.5" stroke-width="1.7"/>
</g></svg>
<div class="t" style="left:303.5px;top:919.04px;font-size:15px;line-height:22px;color:#343a40;letter-spacing:0.1px;">6</div>
<div class="t" style="left:407.5px;top:919.04px;font-size:15px;line-height:22px;color:#343a40;letter-spacing:0.1px;">6</div>
<div class="t" style="left:764.5px;top:919.04px;font-size:15px;line-height:22px;color:#343a40;letter-spacing:1.5px;">N/A</div>
<div class="t" style="left:956.8px;top:919.04px;font-size:15px;line-height:22px;color:#343a40;letter-spacing:0.1px;">6</div>
<svg class="r" style="left:1384.5px;top:916.8px" width="43" height="41" viewBox="0 0 43 41">
<defs><clipPath id="c916"><rect x="0" y="0" width="43" height="30"/></clipPath></defs>
<circle cx="21.3" cy="21" r="21" fill="#fff"/><circle cx="21.3" cy="21" r="21" fill="#676a74" clip-path="url(#c916)"/>
<path d="M0.6 29 Q1 28.5 3 28.5" stroke="#676a74" stroke-width="0" fill="none"/>

<path d="M4.4 34.8 Q4.8 28.2 11.4 27.5" fill="none" stroke="#676a74" stroke-width="1.5"/>
<path d="M38.2 34.8 Q37.8 28.2 31.2 27.5" fill="none" stroke="#676a74" stroke-width="1.5"/>
<path d="M12.2 40.5 V33.5 A9.1 9.1 0 0 1 30.4 33.5 V40.5" fill="#fff" stroke="#676a74" stroke-width="1.6"/>
<circle cx="21.3" cy="18.8" r="5.6" fill="#fff" stroke="#676a74" stroke-width="1"/>
<circle cx="10.6" cy="23.5" r="4" fill="#fff" stroke="#676a74" stroke-width="0.8"/>
<circle cx="32" cy="23.5" r="4" fill="#fff" stroke="#676a74" stroke-width="0.8"/>
<circle cx="3.6" cy="25.4" r="2.8" fill="#fff" stroke="#676a74" stroke-width="0.6"/>
<circle cx="39" cy="25.4" r="2.8" fill="#fff" stroke="#676a74" stroke-width="0.6"/>
</svg>
<div class="r" style="left:30px;top:970px;width:1860px;height:1px;background:#ececec"></div>
<div class="r" style="left:42px;top:985px;width:87px;height:29px;background:#f9fafb;border-radius:4px"></div>
<svg class="r" style="left:48px;top:990px" width="22" height="20" viewBox="0 0 22 20">
<path d="M11.8 4.9 H3.8 V15.7 H13.9 V11.2" fill="none" stroke="#343a40" stroke-width="2" stroke-linejoin="round"/>
<path d="M7 13.8 L7.6 10.6 L13.9 4.3 L16.6 7 L10.3 13.3 Z" fill="#343a40"/>
<path d="M15 4.4 L16.7 2.7 Q17.2 2.3 17.7 2.7 L19 4 Q19.4 4.5 19 5 L17.3 6.7 Z" fill="#343a40"/>
</svg>
<svg class="r" style="left:82.5px;top:991.5px" width="13" height="15" viewBox="0 0 13 15" fill="#343a40">
<path d="M4.5 0.3 H8.3 L8.8 1.2 H12.6 V2.5 H0.4 V1.2 H4 Z"/><path d="M1.5 3.4 H11.5 L11.4 13.4 Q11.3 14.4 10.3 14.4 H2.7 Q1.7 14.4 1.6 13.4 Z"/></svg>
<svg class="r" style="left:110px;top:991px" width="12" height="17" viewBox="0 0 12 17">
<circle cx="7" cy="2.9" r="1.35" fill="#343a40"/>
<g fill="none" stroke="#343a40" stroke-linecap="round" stroke-linejoin="round">
<path d="M6 5.6 L6.6 10.9" stroke-width="2.3"/>
<path d="M5.6 6.1 L3.6 7.4 L3 9" stroke-width="1.4"/>
<path d="M6.9 6 L8.2 7.9 L9.7 9" stroke-width="1.4"/>
<path d="M6.8 10.8 L8.1 13 L8.7 15.5" stroke-width="1.7"/>
<path d="M5.8 11 L4 13.6 L2 15.5" stroke-width="1.7"/>
</g></svg>
<div class="t" style="left:303.5px;top:985.71px;font-size:15px;line-height:22px;color:#343a40;letter-spacing:0.1px;">7</div>
<div class="t" style="left:407.5px;top:985.71px;font-size:15px;line-height:22px;color:#343a40;letter-spacing:0.1px;">7</div>
<div class="t" style="left:764.5px;top:985.71px;font-size:15px;line-height:22px;color:#343a40;letter-spacing:1.5px;">N/A</div>
<div class="t" style="left:956.8px;top:985.71px;font-size:15px;line-height:22px;color:#343a40;letter-spacing:0.1px;">7</div>
<svg class="r" style="left:1384.5px;top:983.4699999999999px" width="43" height="41" viewBox="0 0 43 41">
<defs><clipPath id="c983"><rect x="0" y="0" width="43" height="30"/></clipPath></defs>
<circle cx="21.3" cy="21" r="21" fill="#fff"/><circle cx="21.3" cy="21" r="21" fill="#676a74" clip-path="url(#c983)"/>
<path d="M0.6 29 Q1 28.5 3 28.5" stroke="#676a74" stroke-width="0" fill="none"/>

<path d="M4.4 34.8 Q4.8 28.2 11.4 27.5" fill="none" stroke="#676a74" stroke-width="1.5"/>
<path d="M38.2 34.8 Q37.8 28.2 31.2 27.5" fill="none" stroke="#676a74" stroke-width="1.5"/>
<path d="M12.2 40.5 V33.5 A9.1 9.1 0 0 1 30.4 33.5 V40.5" fill="#fff" stroke="#676a74" stroke-width="1.6"/>
<circle cx="21.3" cy="18.8" r="5.6" fill="#fff" stroke="#676a74" stroke-width="1"/>
<circle cx="10.6" cy="23.5" r="4" fill="#fff" stroke="#676a74" stroke-width="0.8"/>
<circle cx="32" cy="23.5" r="4" fill="#fff" stroke="#676a74" stroke-width="0.8"/>
<circle cx="3.6" cy="25.4" r="2.8" fill="#fff" stroke="#676a74" stroke-width="0.6"/>
<circle cx="39" cy="25.4" r="2.8" fill="#fff" stroke="#676a74" stroke-width="0.6"/>
</svg>
<div class="r" style="left:30px;top:1037px;width:1860px;height:1px;background:#ececec"></div>
<div class="r" style="left:42px;top:1052px;width:87px;height:29px;background:#f9fafb;border-radius:4px"></div>
<svg class="r" style="left:48px;top:1056px" width="22" height="20" viewBox="0 0 22 20">
<path d="M11.8 4.9 H3.8 V15.7 H13.9 V11.2" fill="none" stroke="#343a40" stroke-width="2" stroke-linejoin="round"/>
<path d="M7 13.8 L7.6 10.6 L13.9 4.3 L16.6 7 L10.3 13.3 Z" fill="#343a40"/>
<path d="M15 4.4 L16.7 2.7 Q17.2 2.3 17.7 2.7 L19 4 Q19.4 4.5 19 5 L17.3 6.7 Z" fill="#343a40"/>
</svg>
<svg class="r" style="left:82.5px;top:1058.5px" width="13" height="15" viewBox="0 0 13 15" fill="#343a40">
<path d="M4.5 0.3 H8.3 L8.8 1.2 H12.6 V2.5 H0.4 V1.2 H4 Z"/><path d="M1.5 3.4 H11.5 L11.4 13.4 Q11.3 14.4 10.3 14.4 H2.7 Q1.7 14.4 1.6 13.4 Z"/></svg>
<svg class="r" style="left:110px;top:1057px" width="12" height="17" viewBox="0 0 12 17">
<circle cx="7" cy="2.9" r="1.35" fill="#343a40"/>
<g fill="none" stroke="#343a40" stroke-linecap="round" stroke-linejoin="round">
<path d="M6 5.6 L6.6 10.9" stroke-width="2.3"/>
<path d="M5.6 6.1 L3.6 7.4 L3 9" stroke-width="1.4"/>
<path d="M6.9 6 L8.2 7.9 L9.7 9" stroke-width="1.4"/>
<path d="M6.8 10.8 L8.1 13 L8.7 15.5" stroke-width="1.7"/>
<path d="M5.8 11 L4 13.6 L2 15.5" stroke-width="1.7"/>
</g></svg>
<div class="t" style="left:303.5px;top:1052.37px;font-size:15px;line-height:22px;color:#343a40;letter-spacing:0.1px;">8</div>
<div class="t" style="left:407.5px;top:1052.37px;font-size:15px;line-height:22px;color:#343a40;letter-spacing:0.1px;">8</div>
<div class="t" style="left:764.5px;top:1052.37px;font-size:15px;line-height:22px;color:#343a40;letter-spacing:1.5px;">N/A</div>
<div class="t" style="left:956.8px;top:1052.37px;font-size:15px;line-height:22px;color:#343a40;letter-spacing:0.1px;">8</div>
<svg class="r" style="left:1384.5px;top:1050.1299999999999px" width="43" height="41" viewBox="0 0 43 41">
<defs><clipPath id="c1050"><rect x="0" y="0" width="43" height="30"/></clipPath></defs>
<circle cx="21.3" cy="21" r="21" fill="#fff"/><circle cx="21.3" cy="21" r="21" fill="#676a74" clip-path="url(#c1050)"/>
<path d="M0.6 29 Q1 28.5 3 28.5" stroke="#676a74" stroke-width="0" fill="none"/>

<path d="M4.4 34.8 Q4.8 28.2 11.4 27.5" fill="none" stroke="#676a74" stroke-width="1.5"/>
<path d="M38.2 34.8 Q37.8 28.2 31.2 27.5" fill="none" stroke="#676a74" stroke-width="1.5"/>
<path d="M12.2 40.5 V33.5 A9.1 9.1 0 0 1 30.4 33.5 V40.5" fill="#fff" stroke="#676a74" stroke-width="1.6"/>
<circle cx="21.3" cy="18.8" r="5.6" fill="#fff" stroke="#676a74" stroke-width="1"/>
<circle cx="10.6" cy="23.5" r="4" fill="#fff" stroke="#676a74" stroke-width="0.8"/>
<circle cx="32" cy="23.5" r="4" fill="#fff" stroke="#676a74" stroke-width="0.8"/>
<circle cx="3.6" cy="25.4" r="2.8" fill="#fff" stroke="#676a74" stroke-width="0.6"/>
<circle cx="39" cy="25.4" r="2.8" fill="#fff" stroke="#676a74" stroke-width="0.6"/>
</svg>
<div class="r" style="left:30px;top:1104px;width:1860px;height:1px;background:#ececec"></div>
<div class="r" style="left:42px;top:1118px;width:87px;height:29px;background:#f9fafb;border-radius:4px"></div>
<svg class="r" style="left:48px;top:1123px" width="22" height="20" viewBox="0 0 22 20">
<path d="M11.8 4.9 H3.8 V15.7 H13.9 V11.2" fill="none" stroke="#343a40" stroke-width="2" stroke-linejoin="round"/>
<path d="M7 13.8 L7.6 10.6 L13.9 4.3 L16.6 7 L10.3 13.3 Z" fill="#343a40"/>
<path d="M15 4.4 L16.7 2.7 Q17.2 2.3 17.7 2.7 L19 4 Q19.4 4.5 19 5 L17.3 6.7 Z" fill="#343a40"/>
</svg>
<svg class="r" style="left:82.5px;top:1125.5px" width="13" height="15" viewBox="0 0 13 15" fill="#343a40">
<path d="M4.5 0.3 H8.3 L8.8 1.2 H12.6 V2.5 H0.4 V1.2 H4 Z"/><path d="M1.5 3.4 H11.5 L11.4 13.4 Q11.3 14.4 10.3 14.4 H2.7 Q1.7 14.4 1.6 13.4 Z"/></svg>
<svg class="r" style="left:110px;top:1124px" width="12" height="17" viewBox="0 0 12 17">
<circle cx="7" cy="2.9" r="1.35" fill="#343a40"/>
<g fill="none" stroke="#343a40" stroke-linecap="round" stroke-linejoin="round">
<path d="M6 5.6 L6.6 10.9" stroke-width="2.3"/>
<path d="M5.6 6.1 L3.6 7.4 L3 9" stroke-width="1.4"/>
<path d="M6.9 6 L8.2 7.9 L9.7 9" stroke-width="1.4"/>
<path d="M6.8 10.8 L8.1 13 L8.7 15.5" stroke-width="1.7"/>
<path d="M5.8 11 L4 13.6 L2 15.5" stroke-width="1.7"/>
</g></svg>
<div class="t" style="left:303.5px;top:1119.04px;font-size:15px;line-height:22px;color:#343a40;letter-spacing:0.1px;">9</div>
<div class="t" style="left:407.5px;top:1119.04px;font-size:15px;line-height:22px;color:#343a40;letter-spacing:0.1px;">9</div>
<div class="t" style="left:764.5px;top:1119.04px;font-size:15px;line-height:22px;color:#343a40;letter-spacing:1.5px;">N/A</div>
<div class="t" style="left:956.8px;top:1119.04px;font-size:15px;line-height:22px;color:#343a40;letter-spacing:0.1px;">9</div>
<svg class="r" style="left:1384.5px;top:1116.8px" width="43" height="41" viewBox="0 0 43 41">
<defs><clipPath id="c1116"><rect x="0" y="0" width="43" height="30"/></clipPath></defs>
<circle cx="21.3" cy="21" r="21" fill="#fff"/><circle cx="21.3" cy="21" r="21" fill="#676a74" clip-path="url(#c1116)"/>
<path d="M0.6 29 Q1 28.5 3 28.5" stroke="#676a74" stroke-width="0" fill="none"/>

<path d="M4.4 34.8 Q4.8 28.2 11.4 27.5" fill="none" stroke="#676a74" stroke-width="1.5"/>
<path d="M38.2 34.8 Q37.8 28.2 31.2 27.5" fill="none" stroke="#676a74" stroke-width="1.5"/>
<path d="M12.2 40.5 V33.5 A9.1 9.1 0 0 1 30.4 33.5 V40.5" fill="#fff" stroke="#676a74" stroke-width="1.6"/>
<circle cx="21.3" cy="18.8" r="5.6" fill="#fff" stroke="#676a74" stroke-width="1"/>
<circle cx="10.6" cy="23.5" r="4" fill="#fff" stroke="#676a74" stroke-width="0.8"/>
<circle cx="32" cy="23.5" r="4" fill="#fff" stroke="#676a74" stroke-width="0.8"/>
<circle cx="3.6" cy="25.4" r="2.8" fill="#fff" stroke="#676a74" stroke-width="0.6"/>
<circle cx="39" cy="25.4" r="2.8" fill="#fff" stroke="#676a74" stroke-width="0.6"/>
</svg>
<div class="r" style="left:1589px;top:577px;width:6px;height:6px;background:#343a40;border-radius:50%"></div>
<div class="r" style="left:1589px;top:601px;width:6px;height:6px;background:#343a40;border-radius:50%"></div>
<div class="t" style="left:1605px;top:569.04px;font-size:15px;line-height:22px;color:#495057;letter-spacing:0.5px;">12/10/2021 8:55:06 AM</div>
<div class="t" style="left:1605px;top:591.71px;font-size:16px;line-height:24px;font-weight:700;color:#343a40;letter-spacing:-0.35px;">Id dispositivo: D7EA8EF9-B82E-</div>
<div class="t" style="left:1605px;top:615.71px;font-size:16px;line-height:24px;font-weight:700;color:#343a40;letter-spacing:0px;">4B26-B37F-23779300B60D</div>
<div class="t" style="left:1618px;top:648.04px;font-size:15px;line-height:22px;color:#495057;letter-spacing:0.21px;">Unassign device</div>
<div class="t" style="left:30px;top:1193.04px;font-size:15px;line-height:22px;color:#495057;letter-spacing:0.44px;">Showing 1 to 10 of 14 entries</div>
<div class="r" style="left:1678px;top:1178px;width:212px;height:38px;border:1px solid #e9ecef;border-radius:4px;box-sizing:border-box;background:#fff"></div>
<div class="r" style="left:1827px;top:1179px;width:1px;height:36px;background:#e9ecef"></div>
<div class="r" style="left:1761px;top:1178px;width:35px;height:38px;background:#3b3f4a"></div>
<div class="t" style="left:1691px;top:1188.04px;font-size:15px;line-height:22px;color:#6c757d;letter-spacing:0.16px;">Previous</div>
<div class="t" style="left:1773.5px;top:1188.04px;font-size:15px;line-height:22px;color:#fff;">1</div>
<div class="t" style="left:1806.5px;top:1188.04px;font-size:15px;line-height:22px;color:#343a40;">2</div>
<div class="t" style="left:1845px;top:1188.04px;font-size:15px;line-height:22px;color:#343a40;letter-spacing:0.7px;">Next</div>
</body></html>
